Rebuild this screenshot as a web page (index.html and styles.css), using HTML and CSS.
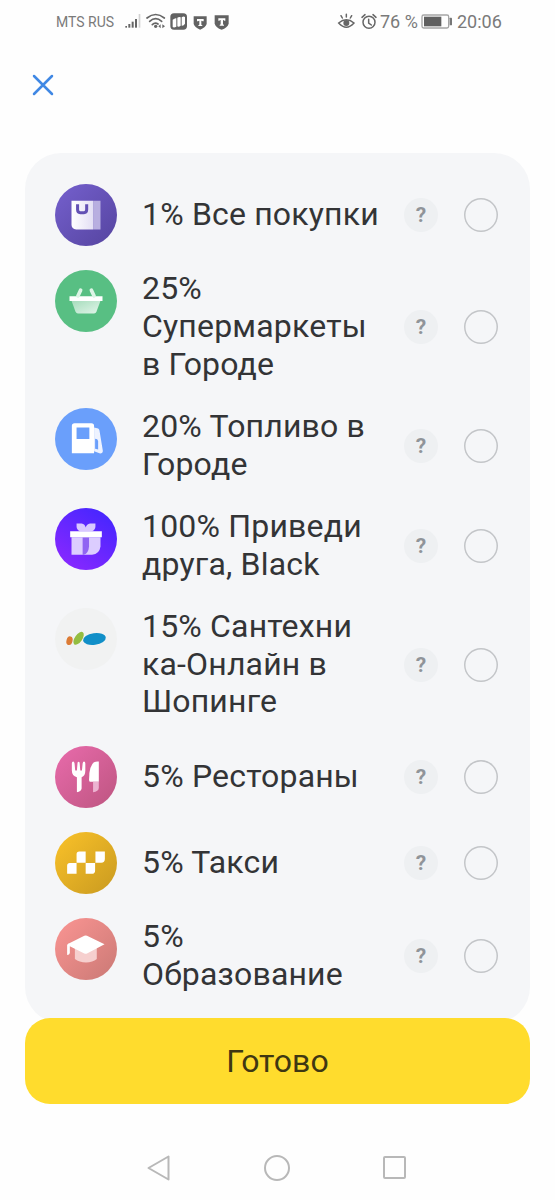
FILE: index.html
```html
<!DOCTYPE html>
<html lang="ru">
<head>
<meta charset="utf-8">
<title>Выбор кэшбэка</title>
<link rel="stylesheet" href="styles.css">
</head>
<body>
<div class="screen">
  <header class="status">
    <span class="carrier">MTS RUS</span>
    <svg class="net" width="110" height="20" viewBox="0 0 330 60">
      <g fill="#666"><rect x="7" y="42" width="5" height="5"/><rect x="16" y="36" width="6" height="11"/><rect x="26" y="29" width="6" height="18"/><rect x="36" y="21" width="6" height="26"/></g>
      <rect x="47" y="6" width="5" height="41" fill="#d2d2d2"/>
      <g fill="none" stroke="#666" stroke-width="5" stroke-linecap="round"><path d="M72 18Q98-3 124 18M80 28Q98 12 116 28M88 38Q96 30 105 36"/></g>
      <circle cx="98" cy="43" r="5" fill="#666"/><path d="M113 37v12l-7-6zM118 37v12l8-6z" fill="#666"/>
      <rect x="142" y="4" width="50" height="49" rx="11" fill="#626262"/>
      <path d="M149 23q8-6 11-4v25q-7 4-11 1zM163 17q6-4 10-1v25q-6 5-10 2zM176 16q6-4 10-1v20q-4 7-10 6z" fill="#fff"/>
      <path d="M212 13h39v23q-4 11-19.500 17q-15.500-6-19.500-17z" fill="#626262"/>
      <path d="M222 21h20v7h-3q-1-2-4-2v12l3 2v2h-12v-2l3-2V26q-3 0-4 2h-3z" fill="#fff"/>
      <path d="M275 10h42v25q-4 12-21 18q-17-6-21-18z" fill="#626262"/>
      <path d="M286 19h21v7h-3q-1-2-4-2v13l3 2v2h-13v-2l3-2V24q-3 0-4 2h-3z" fill="#fff"/>
    </svg>
    <svg class="eye" width="40" height="20" viewBox="0 0 120 60">
      <g fill="none" stroke="#666" stroke-width="4.500" stroke-linecap="round">
        <path d="M5 33Q28 14 51 33Q28 58 5 33zM28 7v8M12 11l4 7M44 11l-4 7"/>
        <circle cx="96" cy="31" r="18"/><path d="M95 22v11l8 6M75 16l9-8M117 16l-9-8"/>
      </g><circle cx="28" cy="33" r="9" fill="#666"/>
    </svg>
    <span class="percent">76 %</span>
    <svg class="battery" width="32" height="16" viewBox="0 0 96 48">
      <rect x="3" y="3" width="80" height="39" rx="5" fill="none" stroke="#a5a5a5" stroke-width="4"/>
      <rect x="9" y="8" width="52" height="29" fill="#606060"/><rect x="86" y="11" width="7" height="23" rx="2" fill="#777"/>
    </svg>
    <span class="time">20:06</span>
  </header>

  <div class="topbar">
    <svg width="22" height="22" viewBox="0 0 22 22"><path d="M2 2l18 18M20 2L2 20" stroke="#4088e4" stroke-width="2.500" stroke-linecap="round"/></svg>
  </div>

  <main class="card">
    <div class="row">
      <svg class="icon bag" viewBox="0 0 184 184">
        <defs><linearGradient id="bagFill"><stop offset="0" stop-color="#fff"/><stop offset="1" stop-color="#e3dff4"/></linearGradient></defs>
        <path d="M49 50h64v85H63q-14-2-14-14z" fill="url(#bagFill)"/><path d="M113 50h22v85h-22z" fill="#b8afe0"/>
        <path d="M67 60v16q0 9 8 9h11q8 0 8-9V60" fill="none" stroke="#6351b4" stroke-width="9"/>
      </svg>
      <div class="name">1% Все покупки</div><span class="help">?</span><span class="radio"></span>
    </div>
    <div class="row">
      <svg class="icon basket" viewBox="0 0 184 184">
        <defs><linearGradient id="basketFill" x2="1" y2="1"><stop offset="0" stop-color="#a5dcbb"/><stop offset="1" stop-color="#e2f5ea"/></linearGradient></defs>
        <path d="M49 91h86l-12 33q-2 5-7 5H68q-5 0-7-5z" fill="url(#basketFill)"/><path d="M43 78h98v14H43z" fill="#fff"/>
        <path d="M68 77l8-17M116 77l-8-17" fill="none" stroke="#ddf5e6" stroke-width="11" stroke-linecap="round"/>
      </svg>
      <div class="name">25%<br>Супермаркеты<br>в Городе</div><span class="help">?</span><span class="radio"></span>
    </div>
    <div class="row">
      <svg class="icon fuel" viewBox="0 0 184 184">
        <path fill-rule="evenodd" d="M58 45h50q8 0 8 8v81H50V53q0-8 8-8zM64 58v34h38V58z" fill="#fff"/>
        <path fill-rule="evenodd" d="M116 58l12 3q3 1 4 6l10 60q0 8-8 8l-18-7zM119 91v30l9 2v-25q-1-7-9-7z" fill="#eef3ff"/>
      </svg>
      <div class="name">20% Топливо в<br>Городе</div><span class="help">?</span><span class="radio"></span>
    </div>
    <div class="row">
      <svg class="icon gift" viewBox="0 0 184 184">
        <path d="M64 46h15q10 2 12 12q3-10 13-12h16v9q0 10-10 14H74q-10-4-10-14z" fill="#d9c8ff"/>
        <path d="M49 87h86v27q-3 22-25 25H49z" fill="#dccdff"/><path d="M82 87h19v27q-2 20-15 25h-4z" fill="#9065f2"/>
        <path d="M45 69h94v18H45z" fill="#fff"/>
      </svg>
      <div class="name">100% Приведи<br>друга, Black</div><span class="help">?</span><span class="radio"></span>
    </div>
    <div class="row">
      <svg class="icon leaf" viewBox="0 0 184 184">
        <ellipse cx="43" cy="97" rx="9" ry="13" transform="rotate(15 43 97)" fill="#dc7b35"/>
        <ellipse cx="70" cy="90" rx="11" ry="22" transform="rotate(35 70 90)" fill="#94bd40"/>
        <ellipse cx="117" cy="92" rx="34" ry="17" transform="rotate(-8 117 92)" fill="#118fc8"/>
      </svg>
      <div class="name">15% Сантехни<br>ка-Онлайн в<br>Шопинге</div><span class="help">?</span><span class="radio"></span>
    </div>
    <div class="row">
      <svg class="icon food" viewBox="0 0 184 184">
        <path d="M54 46q3 0 4 6l2 21h5l2-24q3-5 6 0l2 24h5l2-21q1-6 4-6q4 0 4 6v21q0 16-11 20v33q-2 10-14 11V93q-15-4-15-20V52q0-6 4-6z" fill="#fff"/>
        <path d="M130 46v60h-26q-3 0-3-6q0-43 15-52q6-3 14-2z" fill="#fff"/><path d="M113 106h17v19q-1 11-17 12z" fill="#ecb3d1"/>
      </svg>
      <div class="name">5% Рестораны</div><span class="help">?</span><span class="radio"></span>
    </div>
    <div class="row">
      <svg class="icon taxi" viewBox="0 0 184 184">
        <path d="M72 58h19v33H64V66q0-8 8-8zM120 58h28v22q0 11-11 11h-17zM44 92h20v32H36v-24q0-8 8-8zM91 92h28v22q0 10-10 10H91z" fill="#fff"/>
      </svg>
      <div class="name">5% Такси</div><span class="help">?</span><span class="radio"></span>
    </div>
    <div class="row">
      <svg class="icon study" viewBox="0 0 184 184">
        <path d="M59 88h65v34q-12 10-32 10t-33-10z" fill="#f6cfce"/>
        <path d="M36 80q1-4 8-6l43-21q4-2 8 0l52 25l-52 27q-4 2-8 0L44 84v20q-1 6-8 6z" fill="#fff"/>
      </svg>
      <div class="name">5%<br>Образование</div><span class="help">?</span><span class="radio"></span>
    </div>
  </main>
  <button class="done">Готово</button>

  <nav class="navbar">
    <svg width="26" height="28" viewBox="0 0 26 28"><path d="M2.500 14L22.500 2.500v23z"/></svg>
    <svg width="26" height="28" viewBox="0 0 26 28"><circle cx="13" cy="14" r="12"/></svg>
    <svg width="26" height="28" viewBox="0 0 26 28"><rect x="2" y="3" width="21" height="21" rx="1"/></svg>
  </nav>
</div>
</body>
</html>
```
FILE: styles.css
```css
* { box-sizing: border-box; }
body { margin: 0; background: #fefefe; font-family: Roboto, "Liberation Sans", sans-serif; }
.screen { width: 555px; height: 1200px; overflow: hidden; display: flex; flex-direction: column; }
.status { height: 43px; padding-left: 56px; display: flex; align-items: center; color: #7a7a7a; flex: none; white-space: nowrap; }
.carrier { width: 67px; font-size: 14px; }
.net { flex: none; }
.eye { margin-left: 104px; flex: none; }
.percent { width: 41px; margin-left: 3px; font-size: 18px; }
.battery { flex: none; }
.time { margin-left: 4px; font-size: 18px; }
.topbar { height: 110px; padding: 31px 32px; flex: none; }
.topbar svg { display: block; }
.card {
  height: 870px; margin: 0 25px; padding: 30.7px 32px 0 30px; flex: none;
  background: #f5f6f8; border-radius: 36px;
  display: flex; flex-direction: column; gap: 24.4px;
}
.row { display: flex; align-items: center; flex: none; }
.icon { width: 62px; height: 62px; border-radius: 50%; align-self: flex-start; flex: none; }
.bag { background: linear-gradient(135deg, #7560ce, #55449f); }
.basket { background: #58bf83; }
.fuel { background: #6a9ffb; }
.gift { background: linear-gradient(35deg, #8428ff 15%, #4a26ff 85%); }
.leaf { background: #f1f2f2; }
.food { background: linear-gradient(135deg, #e96bac, #bd5580); }
.taxi { background: linear-gradient(135deg, #fac229, #c99a20); }
.study { background: linear-gradient(135deg, #fb9593, #ca7975); }
.name { width: 262px; padding-left: 25px; font-size: 32px; line-height: 37.8px; letter-spacing: 0.18px; color: #333436; white-space: nowrap; flex: none; }
.help {
  width: 34px; height: 34px; margin-left: 25px; border-radius: 50%; flex: none;
  background: #eef0f2; color: #909499; font-size: 21px; font-weight: 700; line-height: 34px; text-align: center;
}
.radio { width: 34px; height: 34px; margin-left: 26px; box-shadow: inset 0 0 0 1.5px #c3c5c8; border-radius: 50%; flex: none; }
.done {
  height: 86px; margin: -5px 25px 0; padding: 0; border: 0; border-radius: 25px; flex: none; position: relative;
  background: #ffdc2d; color: #3f3712; font: 32px/86px Roboto, "Liberation Sans", sans-serif;
}
.navbar { height: 96px; padding: 50px 0 0 146px; display: flex; gap: 92px; flex: none; }
.navbar svg { flex: none; fill: none; stroke: #b8b8b8; stroke-width: 2; stroke-linejoin: round; }
```
